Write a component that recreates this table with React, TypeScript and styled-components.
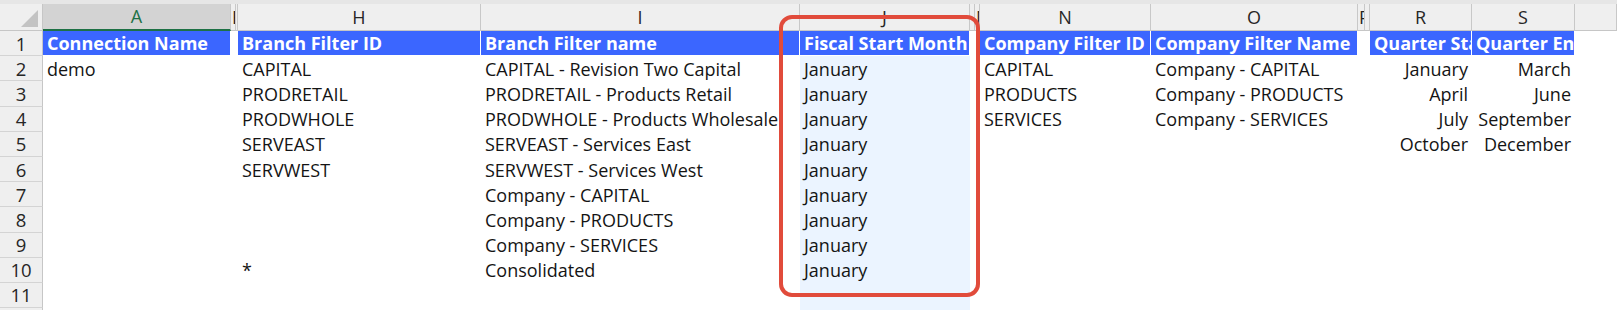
import React from 'react'
import styled, { createGlobalStyle } from 'styled-components'

const GlobalStyle = createGlobalStyle`
  body {
    margin: 0;
    background: #ffffff;
    overflow: hidden;
  }
`

type Column = {
  key: string
  width: number
  letter: string
  narrow?: boolean
  align?: 'left' | 'right'
  tint?: boolean
}

const COLUMNS: Column[] = [
  { key: 'a', width: 188, letter: 'A' },
  { key: 'b', width: 5, letter: 'B', narrow: true },
  { key: 'c', width: 2, letter: '', narrow: true },
  { key: 'h', width: 243, letter: 'H' },
  { key: 'i', width: 319, letter: 'I' },
  { key: 'j', width: 170, letter: 'J', tint: true },
  { key: 'k', width: 5, letter: '', narrow: true },
  { key: 'm', width: 5, letter: 'M', narrow: true },
  { key: 'n', width: 171, letter: 'N' },
  { key: 'o', width: 207, letter: 'O' },
  { key: 'p', width: 7, letter: 'P', narrow: true },
  { key: 'q', width: 5, letter: '', narrow: true },
  { key: 'r', width: 102, letter: 'R', align: 'right' },
  { key: 's', width: 103, letter: 'S', align: 'right' },
]

const HEADERS: Record<string, string> = {
  a: 'Connection Name',
  h: 'Branch Filter ID',
  i: 'Branch Filter name',
  j: 'Fiscal Start Month',
  n: 'Company Filter ID',
  o: 'Company Filter Name',
  r: 'Quarter Start',
  s: 'Quarter End',
}

const ROWS: Record<string, string>[] = [
  { a: 'demo', h: 'CAPITAL', i: 'CAPITAL - Revision Two Capital', j: 'January', n: 'CAPITAL', o: 'Company - CAPITAL', r: 'January', s: 'March' },
  { h: 'PRODRETAIL', i: 'PRODRETAIL - Products Retail', j: 'January', n: 'PRODUCTS', o: 'Company - PRODUCTS', r: 'April', s: 'June' },
  { h: 'PRODWHOLE', i: 'PRODWHOLE - Products Wholesale', j: 'January', n: 'SERVICES', o: 'Company - SERVICES', r: 'July', s: 'September' },
  { h: 'SERVEAST', i: 'SERVEAST - Services East', j: 'January', r: 'October', s: 'December' },
  { h: 'SERVWEST', i: 'SERVWEST - Services West', j: 'January' },
  { i: 'Company - CAPITAL', j: 'January' },
  { i: 'Company - PRODUCTS', j: 'January' },
  { i: 'Company - SERVICES', j: 'January' },
  { h: '*', i: 'Consolidated', j: 'January' },
  {},
  {},
]

const ACTIVE_COLUMN = 'a'

const Sheet = styled.div`
  position: relative;
  width: 1617px;
  height: 310px;
  overflow: hidden;
  background: #ffffff;
  font-family: 'Open Sans', 'Liberation Sans', sans-serif;
`

const TopStrip = styled.div`
  height: 4px;
  background: #e6e6e6;
`

const Grid = styled.div`
  display: grid;
  grid-template-columns: 43px ${COLUMNS.map((c) => `${c.width}px`).join(' ')} 1fr;
  grid-template-rows: 27px;
  grid-auto-rows: 25.2px;
`

const Corner = styled.div`
  display: flex;
  align-items: flex-end;
  justify-content: flex-end;
  padding: 0 4px 3px 0;
  background: #efefef;
  border-right: 1px solid #c6c6c6;
  border-bottom: 1px solid #c6c6c6;
  box-sizing: border-box;
`

const ColHead = styled.div<{ $active?: boolean; $narrow?: boolean }>`
  display: flex;
  align-items: center;
  justify-content: ${({ $narrow }) => ($narrow ? 'flex-start' : 'center')};
  padding-left: ${({ $narrow }) => ($narrow ? '1px' : '0')};
  overflow: hidden;
  box-sizing: border-box;
  background: ${({ $active }) => ($active ? '#d3d3d3' : '#efefef')};
  border-right: 1px solid #c8c8c8;
  border-bottom: ${({ $active }) => ($active ? '2px solid #1e7145' : '1px solid #c6c6c6')};
  color: ${({ $active }) => ($active ? '#1e7145' : '#262626')};
  font-size: 18px;
  line-height: 27px;
  white-space: nowrap;
`

const RowHead = styled.div`
  display: flex;
  align-items: center;
  justify-content: center;
  box-sizing: border-box;
  background: #efefef;
  border-right: 1px solid #c6c6c6;
  border-bottom: 1px solid #d4d4d4;
  color: #262626;
  font-size: 18.5px;
`

const HeaderCell = styled.div<{ $filled: boolean }>`
  display: flex;
  align-items: center;
  padding: 0 4px;
  overflow: hidden;
  box-sizing: border-box;
  white-space: nowrap;
  background: ${({ $filled }) => ($filled ? '#3b66ff' : '#ffffff')};
  border-right: 1px solid #ffffff;
  border-bottom: 1px solid #ffffff;
  color: #ffffff;
  font-size: 18px;
  font-weight: 700;
`

const Cell = styled.div<{ $align?: 'left' | 'right'; $tint?: boolean }>`
  display: flex;
  align-items: center;
  justify-content: ${({ $align }) => ($align === 'right' ? 'flex-end' : 'flex-start')};
  padding: 0 4px;
  overflow: hidden;
  box-sizing: border-box;
  white-space: nowrap;
  background: ${({ $tint }) => ($tint ? '#ebf4ff' : 'transparent')};
  color: #141414;
  font-size: 18px;
`

const Highlight = styled.div`
  position: absolute;
  left: 779px;
  top: 15px;
  width: 201px;
  height: 282px;
  box-sizing: border-box;
  border: 4px solid #e14b3b;
  border-radius: 13px;
  pointer-events: none;
`

const CornerMark = () => (
  <svg width="17" height="17" viewBox="0 0 17 17">
    <path d="M17 0 L17 17 L0 17 Z" fill="#c3c3c3" />
  </svg>
)

const App = () => {
  return (
    <Sheet>
      <GlobalStyle />
      <TopStrip />
      <Grid>
        <Corner>
          <CornerMark />
        </Corner>
        {COLUMNS.map((col) => (
          <ColHead key={col.key} $active={col.key === ACTIVE_COLUMN} $narrow={col.narrow}>
            {col.letter}
          </ColHead>
        ))}
        <ColHead />

        <RowHead>1</RowHead>
        {COLUMNS.map((col) => (
          <HeaderCell key={col.key} $filled={!!HEADERS[col.key]}>
            {HEADERS[col.key]}
          </HeaderCell>
        ))}
        <Cell />

        {ROWS.map((row, idx) => (
          <React.Fragment key={idx}>
            <RowHead>{idx + 2}</RowHead>
            {COLUMNS.map((col) => (
              <Cell key={col.key} $align={col.align} $tint={col.tint}>
                {row[col.key]}
              </Cell>
            ))}
            <Cell />
          </React.Fragment>
        ))}
      </Grid>
      <Highlight />
    </Sheet>
  )
}

export default App
